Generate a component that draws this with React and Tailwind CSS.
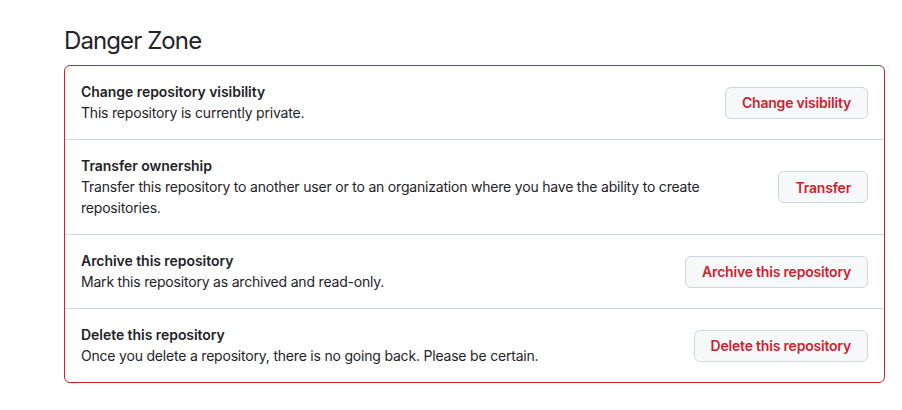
export default function App() {
  const rows = [
    {
      title: "Change repository visibility",
      desc: "This repository is currently private.",
      btn: "Change visibility",
    },
    {
      title: "Transfer ownership",
      desc: "Transfer this repository to another user or to an organization where you have the ability to create repositories.",
      btn: "Transfer",
    },
    {
      title: "Archive this repository",
      desc: "Mark this repository as archived and read-only.",
      btn: "Archive this repository",
    },
    {
      title: "Delete this repository",
      desc: "Once you delete a repository, there is no going back. Please be certain.",
      btn: "Delete this repository",
    },
  ];
  return (
    <div
      className="min-h-[410px] w-[902px] bg-white text-[#1f2328]"
      style={{ fontFamily: 'Inter, "Liberation Sans", Arial, sans-serif' }}
    >
      <div className="pl-16 pr-[17px] pt-[23px]">
        <h2 className="mb-[6px] text-[24px] font-normal leading-[36px] tracking-[-0.9px]">Danger Zone</h2>
        <div className="rounded-[6px] border border-[#cf222e]">
          {rows.map((r, i) => (
            <div
              key={i}
              className={
                "flex items-center gap-4 p-4 " +
                (i > 0 ? "border-t border-[#d0d7de]" : "")
              }
            >
              <div className="min-w-0 flex-1 pr-[40px] text-[14px]">
                <div className="font-semibold leading-[20px] tracking-[-0.05px]">{r.title}</div>
                <div className="leading-[21px] tracking-[-0.2px]">{r.desc}</div>
              </div>
              <button className="h-8 shrink-0 whitespace-nowrap rounded-[6px] border border-[#d0d7de] bg-[#f6f8fa] px-4 text-[14px] font-semibold tracking-[-0.2px] text-[#cf222e]">
                {r.btn}
              </button>
            </div>
          ))}
        </div>
      </div>
    </div>
  );
}
